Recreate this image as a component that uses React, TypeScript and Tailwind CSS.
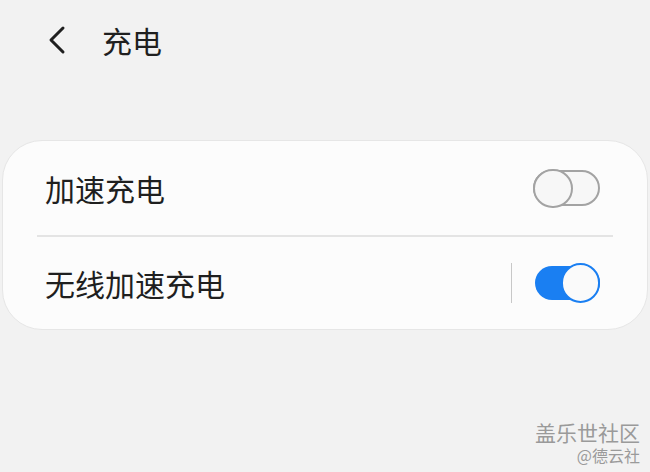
const FONT = "font-['Noto_Sans_CJK_SC','Noto_Sans',sans-serif]"

function Toggle({ on }: { on: boolean }) {
  if (on) {
    return (
      <div className="relative flex h-[40px] w-[65px] items-center">
        <div className="h-[34px] w-full rounded-full bg-[#1a7ff2]" />
        <div className="absolute right-0 top-0 h-[40px] w-[39px] rounded-full border-2 border-[#1a7ff2] bg-[#fafafa]" />
      </div>
    )
  }
  return (
    <div className="relative flex h-[39px] w-[67px] items-center">
      <div className="h-[36px] w-full rounded-full border-2 border-[#a3a3a3] bg-[#f7f7f7]" />
      <div className="absolute left-0 top-0 h-[39px] w-[40px] rounded-full border-2 border-[#a3a3a3] bg-[#f7f7f7]" />
    </div>
  )
}

export default function App() {
  return (
    <div className={`relative h-[472px] w-[650px] overflow-hidden bg-[#f2f2f2] ${FONT}`}>
      <div className="flex h-[80px] items-center pl-[46px]">
        <svg width="22" height="30" viewBox="0 0 22 30" fill="none">
          <path d="M17 3 L5 15 L17 27" stroke="#1f1f1f" strokeWidth="3" strokeLinecap="round" strokeLinejoin="round" />
        </svg>
        <h1 className="ml-[34px] text-[30px] leading-none text-[#1f1f1f]">充电</h1>
      </div>

      <div className="mx-[2px] mt-[60px] rounded-[40px] border border-[#e6e6e6] bg-[#fcfcfc]">
        <div className="flex h-[94px] items-center justify-between pl-[42px] pr-[47px]">
          <span className="text-[30px] leading-none text-[#1f1f1f]">加速充电</span>
          <Toggle on={false} />
        </div>
        <div className="mx-[34px] h-[2px] bg-[#e4e4e4]" />
        <div className="flex h-[92px] items-center justify-between pl-[42px] pr-[47px]">
          <span className="text-[30px] leading-none text-[#1f1f1f]">无线加速充电</span>
          <div className="flex items-center gap-[23px]">
            <div className="h-[40px] w-[1.5px] bg-[#c8c8c8]" />
            <Toggle on={true} />
          </div>
        </div>
      </div>

      <div className="absolute bottom-[9px] right-[10px] flex flex-col items-end gap-[4px] text-[#9a9a9a]">
        <span className="text-[21px] leading-[21px]">盖乐世社区</span>
        <span className="text-[16px] leading-[16px]">@德云社</span>
      </div>
    </div>
  )
}
